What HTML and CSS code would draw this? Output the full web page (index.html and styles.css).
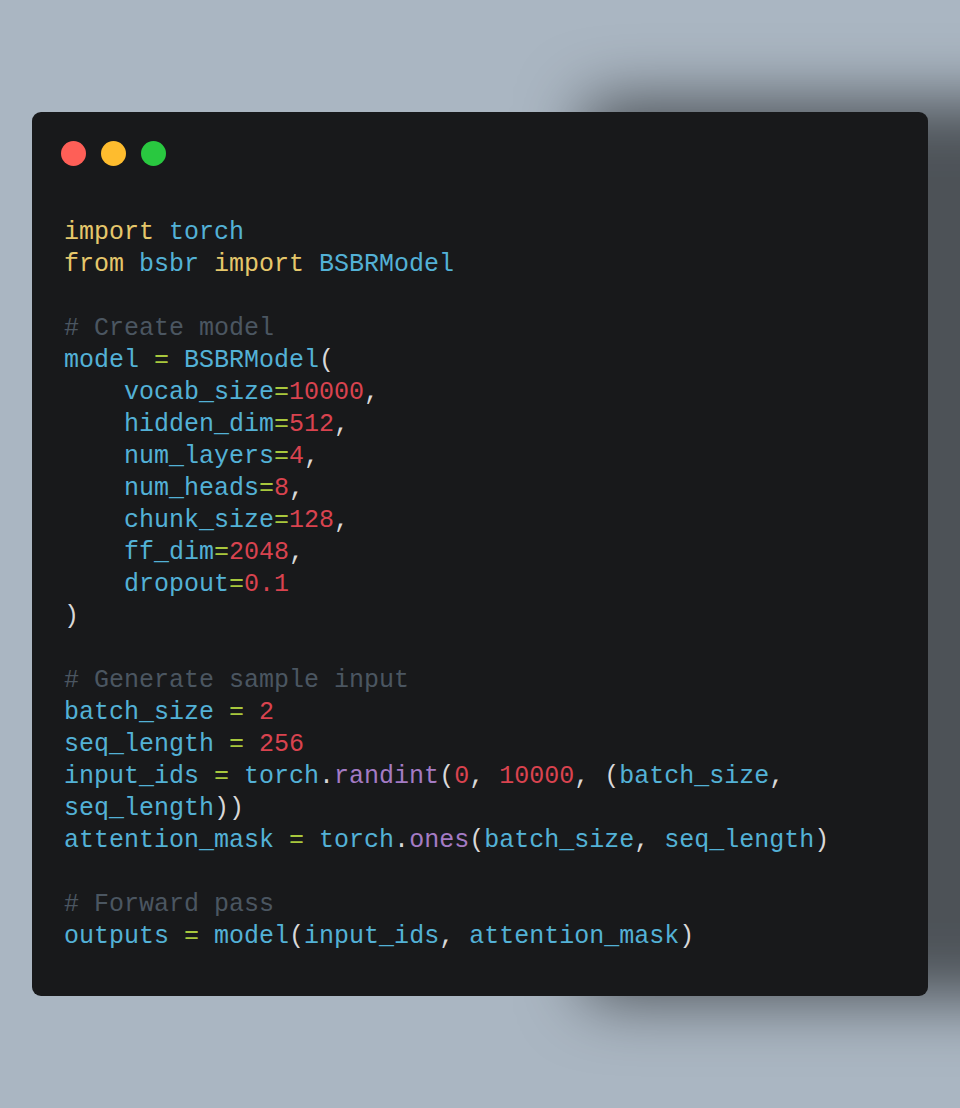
FILE: index.html
```html
<!DOCTYPE html>
<html lang="en">
<head>
<meta charset="utf-8">
<title>Code</title>
<link rel="stylesheet" href="styles.css">
</head>
<body>
<main class="stage">
  <section class="window">
    <div class="dots">
      <span class="dot red"></span>
      <span class="dot yellow"></span>
      <span class="dot green"></span>
    </div>
<pre class="code"><span class="kw">import</span> <span class="id">torch</span>
<span class="kw">from</span> <span class="id">bsbr</span> <span class="kw">import</span> <span class="id">BSBRModel</span>

<span class="cm"># Create model</span>
<span class="id">model</span> <span class="op">=</span> <span class="id">BSBRModel</span><span class="pn">(</span>
    <span class="id">vocab_size</span><span class="op">=</span><span class="nm">10000</span><span class="pn">,</span>
    <span class="id">hidden_dim</span><span class="op">=</span><span class="nm">512</span><span class="pn">,</span>
    <span class="id">num_layers</span><span class="op">=</span><span class="nm">4</span><span class="pn">,</span>
    <span class="id">num_heads</span><span class="op">=</span><span class="nm">8</span><span class="pn">,</span>
    <span class="id">chunk_size</span><span class="op">=</span><span class="nm">128</span><span class="pn">,</span>
    <span class="id">ff_dim</span><span class="op">=</span><span class="nm">2048</span><span class="pn">,</span>
    <span class="id">dropout</span><span class="op">=</span><span class="nm">0.1</span>
<span class="pn">)</span>

<span class="cm"># Generate sample input</span>
<span class="id">batch_size</span> <span class="op">=</span> <span class="nm">2</span>
<span class="id">seq_length</span> <span class="op">=</span> <span class="nm">256</span>
<span class="id">input_ids</span> <span class="op">=</span> <span class="id">torch</span><span class="pn">.</span><span class="fn">randint</span><span class="pn">(</span><span class="nm">0</span><span class="pn">,</span> <span class="nm">10000</span><span class="pn">,</span> <span class="pn">(</span><span class="id">batch_size</span><span class="pn">,</span> <span class="id">seq_length</span><span class="pn">))</span>
<span class="id">attention_mask</span> <span class="op">=</span> <span class="id">torch</span><span class="pn">.</span><span class="fn">ones</span><span class="pn">(</span><span class="id">batch_size</span><span class="pn">,</span> <span class="id">seq_length</span><span class="pn">)</span>

<span class="cm"># Forward pass</span>
<span class="id">outputs</span> <span class="op">=</span> <span class="id">model</span><span class="pn">(</span><span class="id">input_ids</span><span class="pn">,</span> <span class="id">attention_mask</span><span class="pn">)</span></pre>
  </section>
</main>
</body>
</html>
```

FILE: styles.css
```css
html, body {
  margin: 0;
  padding: 0;
}

body {
  background: #aab6c2;
  width: 960px;
  height: 1108px;
  overflow: hidden;
}

.stage {
  padding: 112px 32px 0 32px;
}

.window {
  background: #18191b;
  border-radius: 9px;
  padding: 29px 32px 45px 29px;
  height: 884px;
  box-sizing: border-box;
  box-shadow: 560px -4px 64px 8px rgba(0, 0, 0, 0.55);
}

.dots {
  display: flex;
  gap: 15px;
  height: 25px;
}

.dot {
  width: 25px;
  height: 25px;
  border-radius: 50%;
  display: block;
}

.red { background: #fe5f57; }
.yellow { background: #febc2e; }
.green { background: #29c840; }

.code {
  margin: 51px 0 0 0;
  padding-left: 3px;
  font-family: "Liberation Mono", "DejaVu Sans Mono", monospace;
  font-size: 25px;
  line-height: 32px;
  color: #d8d8d8;
  white-space: pre-wrap;
  word-break: normal;
}

.kw { color: #e5c76b; }
.id { color: #53b1d6; }
.cm { color: #4b5661; }
.nm { color: #d9434f; }
.op { color: #a8c83d; }
.fn { color: #a47bc4; }
.pn { color: #d8d8d8; }
```
